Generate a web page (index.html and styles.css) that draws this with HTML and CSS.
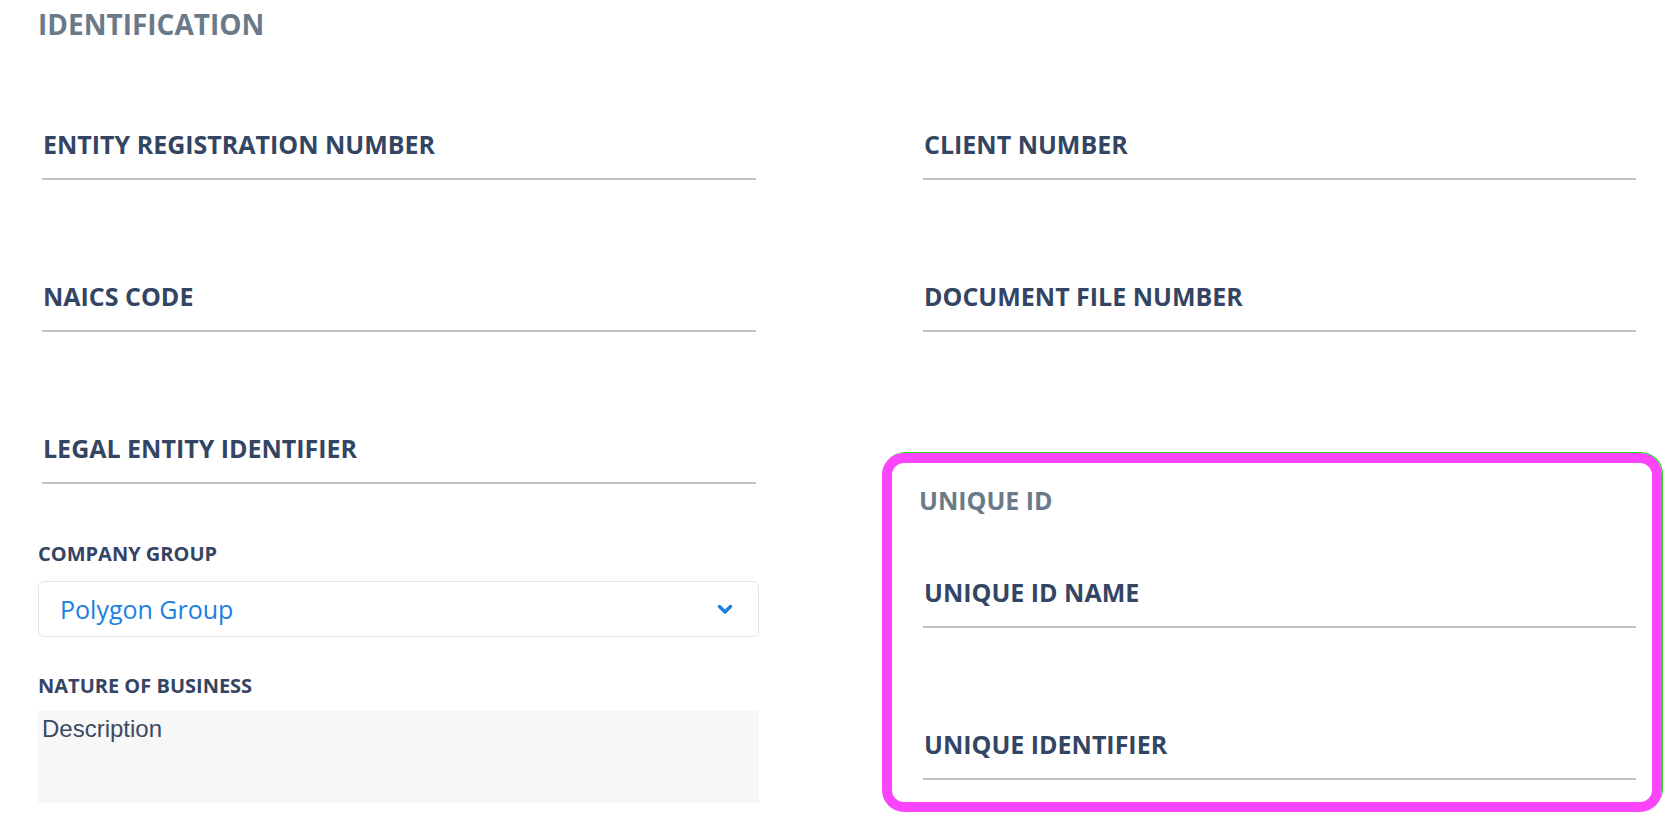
FILE: index.html
```html
<!DOCTYPE html>
<html lang="en">
<head>
    <meta charset="UTF-8">
    <meta name="viewport" content="width=device-width, initial-scale=1.0">
    <title>Identification</title>
    <link rel="stylesheet" href="styles.css">
</head>
<body>
    <div class="page">
        <h2 class="page-title">IDENTIFICATION</h2>

        <div class="columns">
            <div class="col col-left">
                <div class="field"><label>ENTITY REGISTRATION NUMBER</label></div>
                <div class="field"><label>NAICS CODE</label></div>
                <div class="field"><label>LEGAL ENTITY IDENTIFIER</label></div>

                <div class="small-label group-label">COMPANY GROUP</div>
                <div class="select-box">
                    <span>Polygon Group</span>
                    <svg class="chevron" width="16" height="11" viewBox="0 0 16 11">
                        <path d="M2.5 2.5 L8 8 L13.5 2.5" fill="none" stroke="#1b7fe3" stroke-width="3.4" stroke-linecap="round" stroke-linejoin="round"/>
                    </svg>
                </div>

                <div class="small-label business-label">NATURE OF BUSINESS</div>
                <textarea class="description">Description</textarea>
            </div>

            <div class="col col-right">
                <div class="field"><label>CLIENT NUMBER</label></div>
                <div class="field"><label>DOCUMENT FILE NUMBER</label></div>

                <div class="unique-box">
                    <h3 class="box-title">UNIQUE ID</h3>
                    <div class="field"><label>UNIQUE ID NAME</label></div>
                    <div class="field"><label>UNIQUE IDENTIFIER</label></div>
                </div>
            </div>
        </div>
    </div>
</body>
</html>
```

FILE: styles.css
```css
body {
    margin: 0;
    font-family: "Open Sans", Arial, sans-serif;
    background: #fff;
    color: #344563;
}
.page {
    padding: 4px 0 0 38px;
}
.page-title {
    margin: 0;
    font-size: 28px;
    line-height: 40px;
    font-weight: 700;
    color: #6b7a89;
}
.columns {
    display: grid;
    grid-template-columns: 721px 780px;
    column-gap: 123px;
    margin-top: 82px;
}
.col {
    display: flex;
    flex-direction: column;
}
.field {
    height: 52px;
    border-bottom: 2px solid #c2c2c2;
    margin-bottom: 98px;
}
.field label {
    display: block;
    padding-left: 1px;
    font-size: 25px;
    line-height: 36px;
    font-weight: 700;
    color: #344563;
}
.col-left .field {
    margin-left: 4px;
    margin-right: 3px;
}
.col-left .field:nth-of-type(3) {
    margin-bottom: 56px;
}
.col-right > .field {
    margin-left: 41px;
    margin-right: 26px;
}
.col-right > .field:nth-of-type(2) {
    margin-bottom: 121px;
}
.small-label {
    font-size: 20px;
    line-height: 28px;
    font-weight: 700;
    color: #344563;
}
.select-box {
    margin-top: 13px;
    height: 54px;
    border: 1px solid #e6e6e6;
    border-radius: 6px;
    display: flex;
    align-items: center;
    justify-content: space-between;
    padding: 0 25px 0 21px;
    font-size: 25px;
    color: #1b7fe3;
}
.chevron {
    display: block;
}
.business-label {
    margin-top: 35px;
}
.description {
    margin-top: 11px;
    height: 92px;
    box-sizing: border-box;
    border: none;
    resize: none;
    background: #f7f7f7;
    padding: 4px 4px;
    font-family: "Liberation Sans", Arial, sans-serif;
    font-size: 24px;
    color: #3a4a63;
}
.unique-box {
    border: 10px solid #fc44fc;
    border-radius: 22px;
    box-shadow: 1px -1px 0 #1fe01f;
    padding: 19px 16px 22px 27px;
}
.box-title {
    margin: 0 0 56px;
    font-size: 25px;
    line-height: 36px;
    font-weight: 700;
    color: #6b7a89;
}
.unique-box .field {
    margin-left: 4px;
}
.unique-box .field:last-child {
    margin-bottom: 0;
}
```
